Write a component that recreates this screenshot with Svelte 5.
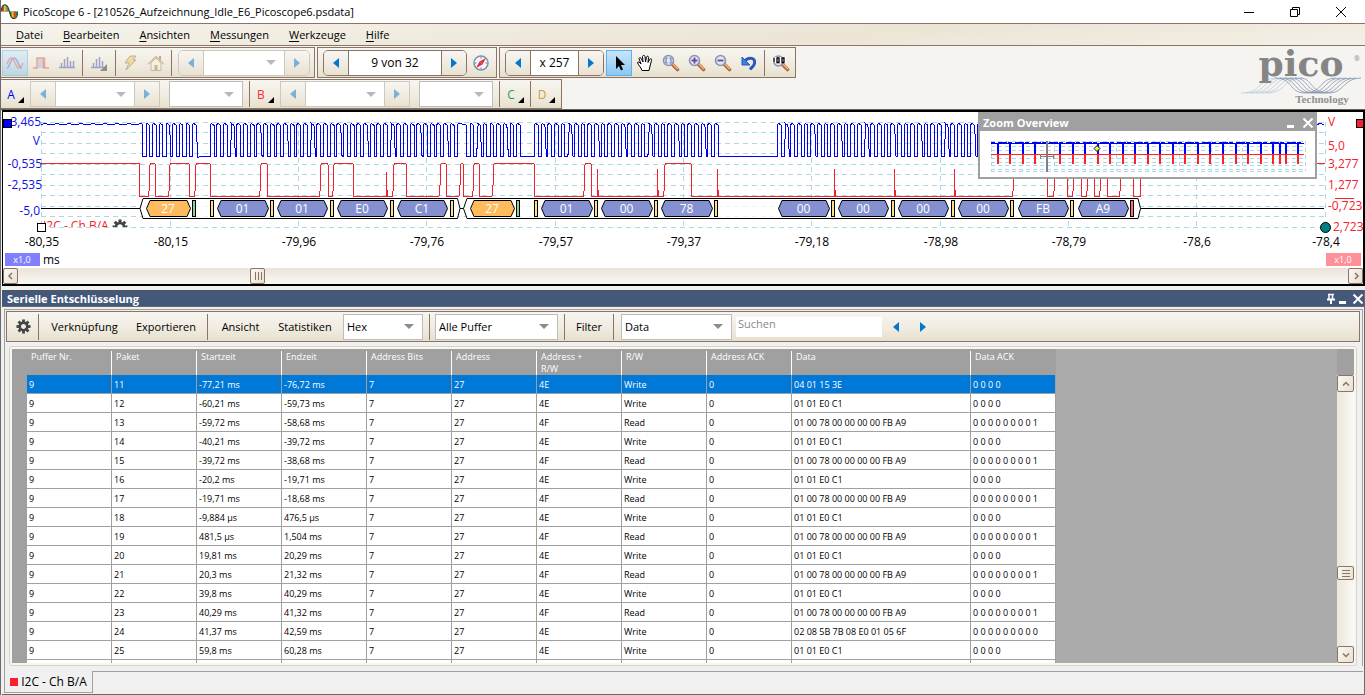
<script>
  const menu = ['Datei', 'Bearbeiten', 'Ansichten', 'Messungen', 'Werkzeuge', 'Hilfe'];

  const columns = ['Puffer Nr.', 'Paket', 'Startzeit', 'Endzeit', 'Address Bits', 'Address', 'Address + R/W', 'R/W', 'Address ACK', 'Data', 'Data ACK'];
  const READ = '01 00 78 00 00 00 00 FB A9';
  const IDLE = '01 01 E0 C1';
  const packets = [
    [11, '-77,21 ms', '-76,72 ms', 'Write', '04 01 15 3E'],
    [12, '-60,21 ms', '-59,73 ms', 'Write', IDLE],
    [13, '-59,72 ms', '-58,68 ms', 'Read', READ],
    [14, '-40,21 ms', '-39,72 ms', 'Write', IDLE],
    [15, '-39,72 ms', '-38,68 ms', 'Read', READ],
    [16, '-20,2 ms', '-19,71 ms', 'Write', IDLE],
    [17, '-19,71 ms', '-18,68 ms', 'Read', READ],
    [18, '-9,884 µs', '476,5 µs', 'Write', IDLE],
    [19, '481,5 µs', '1,504 ms', 'Read', READ],
    [20, '19,81 ms', '20,29 ms', 'Write', IDLE],
    [21, '20,3 ms', '21,32 ms', 'Read', READ],
    [22, '39,8 ms', '40,29 ms', 'Write', IDLE],
    [23, '40,29 ms', '41,32 ms', 'Read', READ],
    [24, '41,37 ms', '42,59 ms', 'Write', '02 08 5B 7B 08 E0 01 05 6F'],
    [25, '59,8 ms', '60,28 ms', 'Write', IDLE]
  ];
  const rows = packets.map(([nr, start, end, rw, data]) => {
    const ack = rw === 'Read' ? '0 0 0 0 0 0 0 0 1' : data.length > 12 ? '0 0 0 0 0 0 0 0 0' : '0 0 0 0';
    return ['9', nr, start, end, '7', '27', rw === 'Read' ? '4F' : '4E', rw, '0', data, ack];
  });
  rows.push(columns.map(() => ''));

  /* Clock line: bursts of 9-bit groups between idle and stretch phases */
  const BIT = 20 / 3;
  function clockPath() {
    const hi = 124.5, lo = 156.5;
    let d = `M41 ${hi}`;
    for (let x = 45; x < 142; x += 4) d += `L${x} ${hi + (x % 3 === 0 ? -1 : 0)}`;
    let n = 0;
    const pulse = (x, w) => {
      n++;
      const slant = n % 4 === 0 ? 1.4 : 0;
      d += `L${x} ${lo}L${x + (n % 3 === 0 ? slant : 0)} ${hi}L${x + 1} ${hi - 1}L${x + w - 1} ${hi}L${x + w} ${hi + 1}L${x + w + slant} ${lo}`;
    };
    d += `L142.5 ${hi}L142.5 ${lo}`;
    for (let i = 0; i < 8; i++) pulse(146 + i * BIT, 3.6);
    d += `L198 157.5L200 ${lo}`;
    for (let i = 0; i < 37; i++) pulse(210.3 + i * BIT, 3.7);
    pulse(457.3, 9.2);
    for (let i = 0; i < 8; i++) pulse(470 + i * BIT, 3.6);
    for (let i = 0; i < 28; i++) pulse(534.6 + i * BIT, 3.7);
    for (let i = 0; i < 54; i++) pulse(777.6 + i * BIT, 3.7);
    return d + `L1140 ${lo}L1140 ${hi}L1317 ${hi}L1320 ${hi - 1}L1324 ${hi}`;
  }
  /* Data line: [rise, fall] of each high phase */
  const highs = [[149.5, 155.5], [169.5, 189.5], [195.5, 210.5], [260.5, 267.5], [320.5, 328], [333.5, 353.5], [393.5, 406.5], [440, 446.5], [460, 463.5], [473.5, 479.5], [493, 534.5], [584.5, 591.5], [664.5, 691.5], [1013.5, 1047.5], [1054.5, 1067.5], [1073.5, 1081.5], [1087.5, 1094.5], [1100.5, 1107.5], [1120.5, 1133.5]];
  const spikes = [386.5, 597.5, 657.5, 717.5, 834.5, 894.5, 954.5];
  const dataPath = 'M41 163.5L139.5 163.5L139.5 196.5' +
    highs.map(([a, b]) => `L${a - 1} 196.5L${a} 185L${a} 166L${a + 1.5} 163.5L${b - 1} 163.5L${b} 165L${b} 196.5`).join('') +
    'L1140.5 196.5L1140.5 163.5L1325 163.5';

  const frames = [['27', 146, 44, 1], ['01', 217, 51], ['01', 277, 50], ['E0', 337, 50], ['C1', 397, 50], ['27', 470, 44, 1], ['01', 541, 51], ['00', 601, 51], ['78', 661, 51], ['00', 778, 51], ['00', 838, 50], ['00', 898, 50], ['00', 958, 50], ['FB', 1018, 50], ['A9', 1078, 50]];
  const bits = [[192, 'g'], [210, 'y'], [270, 'y'], [330, 'y'], [390, 'y'], [450, 'y'], [516, 'g'], [534, 'y'], [594, 'y'], [654, 'y'], [714, 'y'], [831, 'y'], [891, 'y'], [951, 'y'], [1010, 'y'], [1070, 'y'], [1130, 'r']];
  const hex = (x, w) => `M${x + .5} 208.5L${x + 4} 200.5H${x + w - 3}L${x + w + .5} 208.5L${x + w - 3} 216.5H${x + 4}Z`;

  const gridX = [41, 170, 298, 426, 555, 683, 811, 940, 1068, 1196, 1325];
  const gridY = [122, 132, 143, 153, 164, 174, 185, 195, 206, 216, 227];
  const times = ['-80,35', '-80,15', '-79,96', '-79,76', '-79,57', '-79,37', '-79,18', '-78,98', '-78,79', '-78,6', '-78,4'];
  const bursts = [998, 1010, 1023, 1035, 1047, 1060, 1073, 1085, 1098, 1110, 1123, 1135, 1148, 1160, 1173, 1185, 1198, 1210, 1223, 1236, 1248, 1261, 1273, 1280, 1286, 1298];
  const teeth = [0, 45, 90, 135, 180, 225, 270, 315];
</script>

{#snippet arrow(dir)}
  <svg class="arrow" viewBox="0 0 6 10" aria-hidden="true"><path d={dir === 'l' ? 'M6 0v10L0 5z' : 'M0 0v10l6-5z'} fill="#0078d0" /></svg>
{/snippet}

{#snippet gearShape()}
  <g fill="#444">
    {#each teeth as t}<rect x="-1.5" y="-7.5" width="3" height="4" transform="rotate({t})" />{/each}
  </g>
  <circle r="4" fill="none" stroke="#444" stroke-width="2.6" />
{/snippet}

{#snippet drop(label, options, cls, off)}
  <span class="drop {cls}" class:off>
    <select aria-label={label} disabled={off}>{#each options as o}<option>{o}</option>{/each}</select>
    <svg viewBox="0 0 10 5" aria-hidden="true"><path d="M0 0h10L5 5z" fill="#8c8c8c" /></svg>
  </span>
{/snippet}

{#snippet lens(kind)}
  <svg class="ico" viewBox="0 0 18 18" aria-hidden="true">
    <path d="M10.5 10.5l5 5" stroke="#b4683c" stroke-width="3.6" stroke-linecap="round" />
    <path d="M11 10.2l4.6 4.6" stroke="#f2b27c" stroke-width="1.6" stroke-linecap="round" />
    {#if kind === 'full'}
      <circle cx="6.500" cy="7" r="5" fill="#dce6f8" stroke="#8c96ac" stroke-width="1.600" />
      <path d="M0 3h14v6H0z" fill="#fff" />
      <path d="M2 3.500v5M5 4h2v4.500h-2zM10 4h2v4.500h-2z" fill="none" stroke="#000" stroke-width="1.300" />
    {:else}
      <circle cx="6.500" cy="6.500" r="5" fill="#dce6f8" stroke="#8c96ac" stroke-width="1.600" />
      {#if kind === 'area'}<path d="M5.500 4h-1.500v5h1.500M7.500 4h1.500v5h-1.500" stroke="#6272a8" fill="none" />{/if}
      {#if kind !== 'area'}<path d="M3.500 6.500h6" stroke="#70409c" stroke-width="1.800" />{/if}
      {#if kind === 'in'}<path d="M6.500 3.500v6" stroke="#70409c" stroke-width="1.800" />{/if}
    {/if}
  </svg>
{/snippet}

<div class="window">
  <header class="title">
    <svg class="app" viewBox="0 0 16 16" aria-hidden="true">
      <path d="M0 8C1 0 6 0 8 8z" fill="#d83030" /><path d="M2.500 3C3.500 1.500 5 1.800 6 3.500L6 8H2.500z" fill="#60c040" /><path d="M3 8V3l1-1v6z" fill="#e8e040" />
      <path d="M8 8c1 9 6 9 8 0z" fill="#109038" /><path d="M10 8h2v6.500l-2-1.500z" fill="#f0c020" /><path d="M12 8h2v5l-2 1.500z" fill="#e04820" />
      <path d="M0 8C1-.5 6-.5 8 8c1.500 9 7 9 8 0" fill="none" stroke="#333" />
    </svg>
    <h1>PicoScope 6 - [210526_Aufzeichnung_Idle_E6_Picoscope6.psdata]</h1>
    <div class="caption">
      <button aria-label="Minimieren"><svg viewBox="0 0 12 12"><path d="M1 6.500h10" /></svg></button>
      <button aria-label="Wiederherstellen"><svg viewBox="0 0 12 12"><path d="M1.500 3.500h7v7h-7zM3.500 3V1.500h7v7H9" /></svg></button>
      <button aria-label="Schließen"><svg viewBox="0 0 12 12"><path d="M1 1l10 10M11 1L1 11" /></svg></button>
    </div>
  </header>

  <nav class="menu">
    {#each menu as m}<button><u>{m[0]}</u>{m.slice(1)}</button>{/each}
  </nav>

  <div class="bars">
    <div class="stack">
      <div class="line">
        <div class="bar first">
          <button class="tool on dim" aria-label="Oszilloskop"><svg class="ico" viewBox="0 0 18 18"><path d="M1 10C4 2 6 2 9 9s5 6 8 0" fill="none" stroke="#e05058" stroke-width="1.500" /><path d="M1 14C4 14 4 4 8 4s4 10 8 10" fill="none" stroke="#5060c8" stroke-width="1.500" /></svg></button>
          <button class="tool dim" aria-label="Persistenz"><svg class="ico" viewBox="0 0 18 18"><path d="M6 4h6v10H6z" fill="#a8b8d8" /><path d="M1 14h4V4h7v10h5" fill="none" stroke="#e04848" stroke-width="1.500" /><path d="M12 4v10" stroke="#e04848" stroke-width="2.500" /></svg></button>
          <button class="tool dim" aria-label="Spektrum"><svg class="ico" viewBox="0 0 18 18"><path d="M1 13.500h16M3.500 13V9M6.500 13V5M9.500 13V3M12.500 13V7M15.500 13V7" stroke="#3c48b0" stroke-width="1.500" /></svg></button>
          <i class="sep"></i>
          <button class="tool wide dim" aria-label="Spektrumbereich"><svg class="ico" viewBox="0 0 18 18"><path d="M1 13.500h13M3.500 13V9M6.500 13V5M9.500 13V3M12.500 13V7" stroke="#3c48b0" stroke-width="1.500" /><path d="M17 10v7h-7z" fill="#222" /></svg></button>
          <i class="sep"></i>
          <button class="tool dim" aria-label="Automatik"><svg class="ico" viewBox="0 0 18 18"><path d="M9 2h6l-3 4h3L5 16l3-7H4z" fill="#f0c050" stroke="#80683c" /></svg></button>
          <button class="tool dim" aria-label="Startseite"><svg class="ico" viewBox="0 0 18 18"><path d="M12 2h2v5h-2z" fill="#b04848" /><path d="M4 9v7.500h10V9L9 4z" fill="#fff4cc" stroke="#98846c" /><path d="M1.500 10L9 2.500l7.500 7.500" fill="none" stroke="#b08848" stroke-width="1.500" /><path d="M7.500 11h3v5h-3z" fill="#8c7468" /></svg></button>
          <i class="sep"></i>
          <div class="spin off home">
            <button aria-label="Vorheriger Bereich">{@render arrow('l')}</button>
            {@render drop('Zeitbasis', [], 'field', true)}
            <button aria-label="Nächster Bereich">{@render arrow('r')}</button>
          </div>
        </div>
        <div class="bar mid">
          <div class="spin">
            <button aria-label="Vorheriger Puffer">{@render arrow('l')}</button>
            <input class="buffer" aria-label="Puffer" value="9 von 32" />
            <button aria-label="Nächster Puffer">{@render arrow('r')}</button>
          </div>
          <button class="tool" aria-label="Puffernavigator"><svg class="ico" viewBox="0 0 18 18"><circle cx="9" cy="9" r="7" fill="#f4f8ff" stroke="#8090a8" stroke-width="1.500" /><path d="M14 4l-3.500 6.500L7.500 7.500z" fill="#e83030" /><path d="M4 14l3.500-6.500 3 3z" fill="#e83030" /><path d="M9 3v1.500M9 13.500V15M3 9h1.500M13.500 9H15" stroke="#4878d0" /></svg></button>
        </div>
        <div class="bar last">
          <div class="spin">
            <button aria-label="Kleinerer Zoom">{@render arrow('l')}</button>
            <input class="factor" aria-label="Zoomfaktor" value="x 257" />
            <button aria-label="Größerer Zoom">{@render arrow('r')}</button>
          </div>
          <button class="tool on" aria-label="Auswahl"><svg class="ico" viewBox="0 0 18 18"><path d="M6 2v13l3-3 2 4.500 2-1-2-4.500h4z" fill="#000" /></svg></button>
          <button class="tool" aria-label="Hand"><svg class="ico" viewBox="0 0 18 18"><path d="M6 16.500C5 13 2 11 1.500 8.500 2 7.500 3.500 8 5 10L3 4.500c.5-1.500 2-1 2.500.5L7 8 6.500 2.500C7 1 8.500 1 9 2.500L9.500 8l1-5c.8-1.300 2-1 2 .5L12 8.500l2-3.500c1-.8 2 0 1.500 1.500L14 12l-1 4.500z" fill="#fff" stroke="#000" /></svg></button>
          <button class="tool" aria-label="Bereich zoomen">{@render lens('area')}</button>
          <button class="tool" aria-label="Vergrößern">{@render lens('in')}</button>
          <button class="tool" aria-label="Verkleinern">{@render lens('out')}</button>
          <button class="tool" aria-label="Zoom rückgängig"><svg class="ico" viewBox="0 0 18 18"><path d="M4 7.500C9 2 16 4 14.500 9.500 14 12 12 13 10 15.500" fill="none" stroke="#2c58b8" stroke-width="3" /><path d="M2 3v8h8z" fill="#4080e0" stroke="#2c58b8" /></svg></button>
          <i class="sep"></i>
          <button class="tool wide" aria-label="100 Prozent">{@render lens('full')}</button>
        </div>
      </div>
      <div class="line">
        <div class="bar channels">
          {#each ['A', 'B'] as ch}
            <button class="ch {ch}">{ch}<svg viewBox="0 0 6 6" aria-hidden="true"><path d="M6 0v6H0z" /></svg></button>
            <div class="spin off square">
              <button aria-label="Bereich {ch} kleiner">{@render arrow('l')}</button>
              {@render drop('Eingangsbereich ' + ch, [], 'field', true)}
              <button aria-label="Bereich {ch} größer">{@render arrow('r')}</button>
            </div>
            {@render drop('Kopplung ' + ch, [], 'coupling', true)}
            <i class="sep"></i>
          {/each}
          <button class="ch C">C<svg viewBox="0 0 6 6" aria-hidden="true"><path d="M6 0v6H0z" /></svg></button>
          <i class="sep tight"></i>
          <button class="ch D">D<svg viewBox="0 0 6 6" aria-hidden="true"><path d="M6 0v6H0z" /></svg></button>
        </div>
      </div>
    </div>
    <svg class="logo" viewBox="0 0 126 62" role="img" aria-label="pico Technology">
      <g fill="none" stroke="#b4cce0" stroke-width=".8">
        {#each [0, 1, 2, 3, 4, 5] as i}<path d="M{2 + i * 5} 46C{24 + i * 5} 46 {18 + i * 5} 31 {38 + i * 5} 31" />{/each}
      </g>
      <g fill="none" stroke="#8094b0" stroke-width=".8">
        {#each [0, 1, 2, 3, 4, 5] as i}<path d="M{36 + i * 5} 31C{54 + i * 4} 31 {50 + i * 4} 46 {66 + i * 5} 46" /><path d="M{66 + i * 5} 46C{84 + i * 4} 46 {80 + i * 5} 31 {97 + i * 5} 31" />{/each}
      </g>
      <text class="pico" x="62" y="29" text-anchor="middle">pico</text>
      <text class="reg" x="115" y="14">®</text>
      <text class="tech" x="83" y="56" text-anchor="middle">Technology</text>
    </svg>
  </div>

  <section class="scope">
    <div class="canvas">
      <svg class="plot" viewBox="3 112 1360 156" aria-label="Signalansicht">
        <defs><clipPath id="tag"><rect x="44" y="218" width="120" height="9" /></clipPath></defs>
        <g class="grid">
          {#each gridY as y}<path d="M41 {y + .5}H1325" />{/each}
          {#each gridX as x}<path d="M{x + .5} 122V227" />{/each}
        </g>
        <path class="clock" d={clockPath()} />
        <path class="data" d={dataPath} />
        {#each spikes as s}<path class="data" d="M{s} 196V{s === 386.5 ? 172 : 169}M{s + 1} 196V190" />{/each}
        <path class="bus" d="M41 208.500H140L143 198.500H457.500L460 208.500H463.500L467 198.500H1138L1140.500 208.500L1138 218.500H467L463.500 208.500M460 208.500L457.500 218.500H143L140 208.500M1140.500 208.500H1324" />
        {#each bits as [x, c]}<rect class="bit {c}" x={x + .5} y="200.5" width="3" height="16" />{/each}
        {#each frames as [t, x, w, addr]}
          <path class="frame" class:addr d={hex(x, w)} />
          <text class="white" x={x + w / 2} y="213" text-anchor="middle">{t}</text>
        {/each}
        <g class="blue" text-anchor="end">
          <text x="41" y="126">3,465</text><text x="40" y="145">V</text><text x="42" y="168">-0,535</text><text x="42" y="189">-2,535</text><text x="40" y="215">-5,0</text>
        </g>
        <g class="red">
          <text x="1328" y="126">V</text><text x="1328" y="150">5,0</text><text x="1328" y="168">3,277</text><text x="1328" y="189">1,277</text><text x="1328" y="210">-0,723</text><text x="1333" y="231">2,723</text>
          <path d="M1335 198.500h19" stroke="#f22" />
          <text x="43" y="230" clip-path="url(#tag)">I2C - Ch B/A</text>
        </g>
        <g clip-path="url(#tag)"><g transform="translate(120 227)">{@render gearShape()}</g></g>
        {#each times as t, i}<text x={gridX[i] + 1} y="246" text-anchor="middle">{t}</text>{/each}
        <rect x="3.5" y="119.5" width="8" height="8" fill="#00f" stroke="#000" />
        <rect x="37.500" y="223.500" width="8" height="8" fill="#fff" stroke="#000" />
        <rect x="1356.500" y="119.500" width="7" height="8" fill="#f8202c" stroke="#000" />
        <circle cx="1325.500" cy="227.500" r="5" fill="#008080" stroke="#000" />
        <rect x="5" y="253" width="35" height="13" fill="#8080ff" /><text class="scale" x="22" y="263" text-anchor="middle">x1,0</text>
        <text x="43" y="264">ms</text>
        <rect x="1326" y="253" width="35" height="13" fill="#ff9098" /><text class="scale" x="1343" y="263" text-anchor="middle">x1,0</text>
      </svg>
      <aside class="overview">
        <header><h2>Zoom Overview</h2>
          <button aria-label="Übersicht minimieren"><svg viewBox="0 0 12 12"><path d="M2 9.500h7" stroke-width="3" /></svg></button>
          <button aria-label="Übersicht schließen"><svg viewBox="0 0 12 12"><path d="M1.500 1.500l9 9M10.500 1.500l-9 9" stroke-width="2" /></svg></button>
        </header>
        <svg viewBox="980 131 335 46" aria-label="Übersicht">
          <g class="mini">
            {#each [141, 146, 150, 154, 158, 162, 165, 169, 171] as y}<path d="M991 {y + .5}H1305" />{/each}
            {#each [991, 1022, 1054, 1085, 1116, 1148, 1179, 1211, 1242, 1273, 1305] as x}<path d="M{x + .5} 141V171" />{/each}
          </g>
          <g shape-rendering="crispEdges">
            <path d="M991 143.500H1304" stroke="#0000d0" />
            <path d="M991 142.500H1304" stroke="#00f" stroke-dasharray="4 3 9 1" />
            {#each bursts as b}<path d="M{b} 143V154" stroke="#00f" stroke-width="2" /><path d="M{b} 154V164" stroke="#f22" stroke-width="2" />{/each}
            <path d="M991 154.500H1304" stroke="#f22" />
            <path d="M1047 141V172" stroke="#808080" stroke-width="2" /><path d="M1040.500 154v5M1053.500 154v5M1041 156.500h13" stroke="#808080" />
          </g>
          <path d="M1097 145.500l3 3-3 3-3-3z" fill="#ff0" stroke="#00a" />
        </svg>
      </aside>
    </div>
    <div class="hscroll">
      <button aria-label="Nach links"><svg viewBox="0 0 8 8"><path d="M5 1L2 4l3 3" /></svg></button>
      <span class="before"></span>
      <button class="thumb" aria-label="Position"><svg viewBox="0 0 8 8"><path d="M1.500 0v8M4.500 0v8M7.500 0v8" /></svg></button>
      <span class="after"></span>
      <button aria-label="Nach rechts"><svg viewBox="0 0 8 8"><path d="M3 1l3 3-3 3" /></svg></button>
    </div>
  </section>

  <section class="panel">
    <header class="head">
      <h2>Serielle Entschlüsselung</h2>
      <button aria-label="Anheften"><svg viewBox="0 0 12 12"><path d="M3 1.500h6M4 1v5M7.500 1v5" stroke-width="1.500" /><path d="M2 6.500h8M6 7v4" stroke-width="2" /></svg></button>
      <button aria-label="Panel minimieren"><svg viewBox="0 0 12 12"><path d="M2 9.500h7" stroke-width="3" /></svg></button>
      <button class="x" aria-label="Panel schließen"><svg viewBox="0 0 12 12"><path d="M1.500 1.500l9 9M10.500 1.500l-9 9" stroke-width="2" /></svg></button>
    </header>
    <div class="body">
      <div class="bar actions">
        <button class="gear" aria-label="Einstellungen"><svg viewBox="-8 -8 16 16">{@render gearShape()}</svg></button>
        <i class="sep"></i>
        <button class="link">Verknüpfung</button>
        <button class="export">Exportieren</button>
        <i class="sep"></i>
        <button class="view">Ansicht</button>
        <button class="stats">Statistiken</button>
        {@render drop('Format', ['Hex'], 'format', false)}
        <i class="sep spaced"></i>
        {@render drop('Puffer', ['Alle Puffer'], 'buffers', false)}
        <i class="sep spaced"></i>
        <button class="filter">Filter</button>
        <i class="sep"></i>
        {@render drop('Spalte', ['Data'], 'column', false)}
        <input class="search" aria-label="Suchen" placeholder="Suchen" />
        <button class="step" aria-label="Vorheriger Treffer">{@render arrow('l')}</button>
        <button class="step" aria-label="Nächster Treffer">{@render arrow('r')}</button>
      </div>
      <div class="sheet">
        <div class="view-area">
          <table>
            <colgroup><col class="c-head" />{#each columns as c}<col class={c === 'Data' ? 'c-data' : 'c-std'} />{/each}</colgroup>
            <thead><tr><td class="rh"></td>{#each columns as c}<th scope="col"><span>{c}</span></th>{/each}</tr></thead>
            <tbody>
              {#each rows as r, i}
                <tr class:sel={i === 0}><td class="rh"></td>{#each r as v}<td>{v}</td>{/each}</tr>
              {/each}
            </tbody>
          </table>
        </div>
        <div class="vscroll">
          <span class="corner"></span>
          <button aria-label="Nach oben"><svg viewBox="0 0 8 8"><path d="M1 5.500l3-3 3 3" /></svg></button>
          <span class="above"></span>
          <button class="vthumb" aria-label="Zeile"><svg viewBox="0 0 8 8"><path d="M0 1.500h8M0 4.500h8M0 7.500h8" /></svg></button>
          <span class="below"></span>
          <button aria-label="Nach unten"><svg viewBox="0 0 8 8"><path d="M1 2.500l3 3 3-3" /></svg></button>
        </div>
      </div>
    </div>
    <footer><button class="tab"><i></i>I2C - Ch B/A</button><span></span></footer>
  </section>
</div>

<style>
  :global(body) { margin: 0; background: #efefef; }
  .window { height: 100vh; display: flex; flex-direction: column; overflow: hidden; box-sizing: border-box; font: 11px/16px "Open Sans", "Noto Sans", sans-serif; color: #000; background: #f0f0f0; border-left: 1px solid #6a6a6a; }
  .window :global(*) { box-sizing: border-box; }
  button, input, select { font: inherit; color: inherit; margin: 0; padding: 0; border: 0; background: none; border-radius: 0; }
  button { display: flex; align-items: center; justify-content: center; white-space: nowrap; flex: none; }
  h1, h2 { margin: 0; font-size: 11px; font-weight: 400; }

  .title { height: 23px; flex: none; display: flex; align-items: center; background: #fff; gap: 5px; }
  .app { width: 17px; height: 17px; }
  .caption { margin-left: auto; display: flex; padding-right: 1px; }
  .caption button { width: 46px; height: 21px; }
  .caption svg { width: 12px; height: 12px; fill: none; stroke: #000; }

  .menu { height: 23px; flex: none; display: flex; align-items: center; gap: 20px; padding-left: 15px; border: 1px solid #8b7466; border-left: 0; border-right: 0; background: linear-gradient(175deg, #f5f3ec, #ece5d6 60%, #f4f0e6); }
  u { text-underline-offset: 2px; }

  .bars { flex: none; display: flex; justify-content: space-between; background: #f6f4f0; border-bottom: 1px solid #6b625a; padding-top: 1px; }
  .stack { display: flex; flex-direction: column; gap: 1px; }
  .line { display: flex; gap: 2px; }
  .bar { height: 31px; display: flex; align-items: center; border: 1px solid #8b7466; background: linear-gradient(#f7f5f0, #f0ebdf 60%, #e6dfcd); }
  .line .bar { height: 31px; }
  .line + .line .bar { height: 30px; }
  .first { width: 314px; padding-left: 1px; border-left: 0; }
  .mid { width: 180px; padding-left: 5px; }
  .last { width: 297px; padding-left: 5px; }
  .channels { border-left: 0; width: 561px; }
  .tool { width: 26px; height: 26px; }
  .wide { width: 29px; }
  .tool.on { background: linear-gradient(#c8e4fa, #8cc8f4); border: 1px solid #5cb0f0; }
  .dim { opacity: .45; }
  .ico { width: 18px; height: 18px; }
  .sep { width: 1px; height: 26px; margin: 0 1px 0 2px; flex: none; background: #8b7466; }
  .spin { display: flex; height: 26px; border: 1px solid #8b7466; border-radius: 5px; }
  .spin button { width: 24px; border-radius: 4px; background: linear-gradient(#f8f6f2, #e9e2d2); }
  .spin > :nth-child(2) { border: solid #8b7466; border-width: 0 1px; background: #fff; }
  .spin.off, .spin.off > :nth-child(2) { border-color: #cfc6bc; }
  .spin.off .arrow { opacity: .5; }
  .spin input { text-align: center; font-size: 12px; }
  .spin.square { border-radius: 0; }
  .home { margin-left: 5px; }
  .field { width: 82px; }
  .buffer { width: 94px; }
  .factor { width: 49px; }
  .mid .tool { margin-left: 1px; }
  .last .tool.on { margin-left: 2px; }
  .arrow { width: 6px; height: 10px; }
  .drop { display: grid; grid-template-columns: 1fr 10px; align-items: center; height: 26px; padding-right: 8px; background: #fff; border: 1px solid #c0bcb8; flex: none; }
  .drop select { appearance: none; grid-area: 1 / 1 / 2 / 3; width: 100%; padding-left: 3px; background: transparent; opacity: 1; }
  .drop svg { grid-area: 1 / 2; width: 10px; height: 5px; pointer-events: none; }
  .drop.off svg { opacity: .6; }
  .spin .drop { height: 100%; }
  .coupling { width: 74px; margin-left: 9px; }
  .channels .coupling + .sep { margin: 0 1px 0 6px; }
  .channels .spin .drop { width: 80px; }
  .ch { width: 29px; height: 26px; font-size: 12px; gap: 3px; padding-top: 1px; }
  .ch svg { width: 6px; height: 6px; align-self: flex-end; margin-bottom: 4px; }
  .A { color: #00f; } .B { color: #f8303c; } .C { color: #18a050; } .D { color: #d0a030; }
  .channels .tight { margin: 0 1px 0 0; }
  .logo { width: 126px; height: 62px; flex: none; }
  .pico { font: bold 36px "DejaVu Serif", serif; fill: #858585; }
  .logo { overflow: visible; }
  .reg { font-size: 7px; fill: #858585; }
  .tech { font: bold 11px "Liberation Serif", serif; fill: #909090; }

  .scope { flex: none; margin-left: 1px; border: 2px solid #000; border-left-width: 1px; background: #fff; margin-bottom: 4px; }
  .canvas { position: relative; }
  .plot { display: block; width: 100%; fill: #000; font-size: 12px; }
  .grid path, .mini path { stroke: #add8e6; stroke-dasharray: 5 4; fill: none; shape-rendering: crispEdges; }
  .mini path { stroke-dasharray: 4 3; }
  .clock { fill: none; stroke: #0000f0; shape-rendering: crispEdges; }
  .data { fill: none; stroke: #f4202c; shape-rendering: crispEdges; }
  .bus { fill: rgba(255, 255, 255, .75); stroke: #000; stroke-width: 1px; }
  .frame { fill: #8490cf; stroke: #000; stroke-width: 1px; }
  .frame.addr { fill: #ffbb5c; }
  .bit { stroke: #000; }
  .g { fill: #90d0a0; } .y { fill: #ffe080; } .r { fill: #ff6c74; }
  .white { fill: #fff; }
  .blue { fill: #1010e8; }
  .red { fill: #f8202c; }
  .scale { fill: #fff; font-size: 9px; }
  .overview { position: absolute; top: 0; right: 46px; width: 339px; border: 2px solid #a0a0a0; background: #fff; }
  .overview header { height: 17px; display: flex; align-items: center; background: #a0a0a0; color: #fff; gap: 5px; padding: 0 1px 0 3px; }
  .overview h2 { flex: 1; font-weight: 700; }
  .overview > svg { display: block; width: 100%; fill: none; }
  .overview button svg, .head button svg { width: 12px; height: 12px; stroke: #fff; fill: none; }

  .hscroll { display: flex; height: 16px; background: linear-gradient(#e9e3d8, #fbf9f5); }
  .hscroll button, .vscroll button { width: 15px; height: 16px; border: 1px solid #8b7466; border-radius: 2px; background: linear-gradient(120deg, #faf8f4, #e8e1d0); }
  .hscroll svg, .vscroll svg { width: 8px; height: 8px; fill: none; stroke: #8b7466; stroke-width: 1.5px; }
  .hscroll .thumb svg, .vscroll .vthumb svg { stroke-width: 1px; }
  .before { flex: 232; } .after { flex: 1083; }

  .panel { flex: 1; min-height: 0; display: flex; flex-direction: column; margin-left: 1px; border-right: 1px solid #6a6a6a; border-bottom: 1px solid #6a6a6a; padding-left: 2px; }
  .head { height: 17px; flex: none; display: flex; align-items: center; background: #44587a; border-bottom: 1px solid #666; color: #fff; margin: 0 0 2px -2px; padding-left: 5px; border-top: 1px solid #555; }
  .head h2 { flex: 1; font-weight: 700; }
  .head .x { margin-left: 3px; }
  .body { flex: 1; min-height: 0; display: flex; flex-direction: column; border: solid #a0a0a0; border-width: 1px 1px 0; padding: 1px 2px 0 1px; margin-right: 1px; }
  .actions { flex: none; }
  .gear { width: 31px; padding-left: 2px; }
  .gear svg { width: 15px; height: 15px; }
  .actions .gear + .sep { margin: 0; }
  .link { width: 85px; margin-left: 3px; }
  .export { width: 78px; }
  .view { width: 63px; }
  .stats { width: 66px; }
  .format { width: 80px; margin-left: 5px; }
  .buffers { width: 123px; }
  .actions .spaced { margin: 0 5px 0 6px; }
  .filter { width: 38px; margin-right: 3px; }
  .column { width: 111px; margin-left: 6px; }
  .search { width: 146px; height: 20px; margin-left: 4px; background: #fff; padding: 0 2px 7px; }
  .search::placeholder { color: #8a8a8a; opacity: 1; }
  .step { width: 27px; height: 26px; }

  .sheet { flex: 1; min-height: 0; display: flex; margin: 4px 3px 0; padding: 2px; border: 1px solid #dcd2c4; border-radius: 3px; background: #f8f6f2; }
  .view-area { flex: 1; min-width: 0; overflow: hidden; background: #ababab; }
  table { table-layout: fixed; border-collapse: separate; border-spacing: 0; width: 1044px; font-size: 9px; line-height: 12px; }
  .c-head { width: 15px; } .c-std { width: 85px; } .c-data { width: 179px; }
  th { height: 26px; padding: 2px 0 0; background: #a0a0a0; color: #fff; font-weight: 400; text-align: left; vertical-align: top; }
  th span { display: block; height: 24px; padding: 0 4px; border-right: 1px solid #fff; }
  th:nth-child(8) span { padding-right: 30px; }
  th:last-child span { border: 0; }
  td { height: 19px; padding: 1px 0 0 2px; background: #fff; border: solid #a0a0a0; border-width: 0 1px 1px 0; white-space: nowrap; }
  td.rh { background: #a0a0a0; padding: 0; }
  thead td.rh { height: 26px; }
  .sel td:not(.rh) { background: #0078d7; color: #fff; }
  .vscroll { width: 17px; display: flex; flex-direction: column; background: linear-gradient(90deg, #ece6da, #fbf9f5); }
  .vscroll button { width: 17px; height: 17px; }
  .vscroll .vthumb { height: 14px; }
  .corner { height: 26px; background: #a0a0a0; }
  .above { flex: 174; } .below { flex: 66; }

  footer { height: 28px; flex: none; display: flex; margin-right: 1px; align-items: flex-start; }
  footer span { flex: 1; height: 22px; margin-top: 5px; border: solid #a0a0a0; border-width: 1px 0 0 1px; }
  .tab { height: 27px; width: 88px; gap: 3px; border: solid #a0a0a0; border-width: 0 0 1px 1px; padding-top: 5px; font-size: 12px; }
  .tab i { width: 8px; height: 8px; background: #f8202c; }
</style>
